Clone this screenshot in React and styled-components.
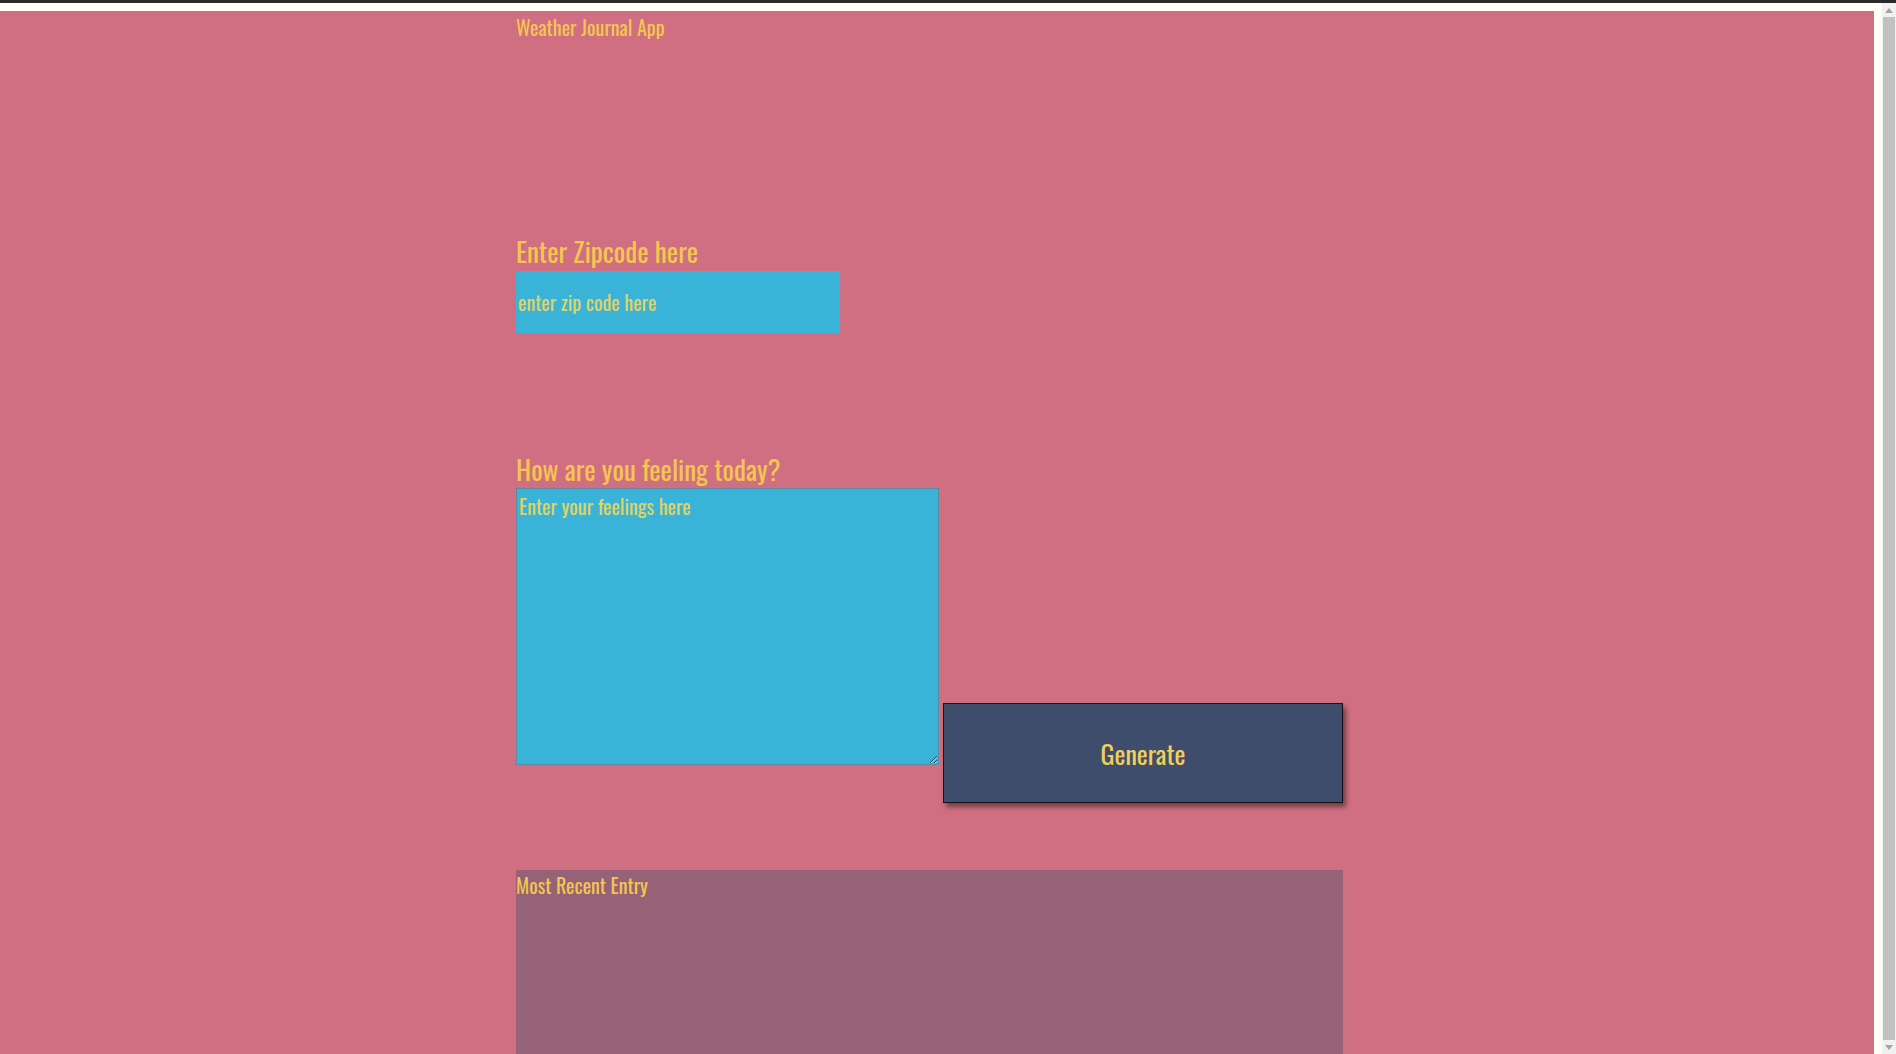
import React from "react";
import styled, { createGlobalStyle } from "styled-components";

const GlobalStyle = createGlobalStyle`
  html {
    border-top: 3px solid #2a2a2a;
    background: #fffff8;
  }
  body {
    margin: 8px 22px 0 0;
    background: #fffff8;
  }
`;

const font = `"Oswald", "Liberation Sans Narrow", "DejaVu Sans Condensed", "Liberation Sans", sans-serif`;

const Page = styled.div`
  background: #d06f82;
  display: grid;
  grid-template-columns: 516px 827px 1fr;
  font-family: ${font};
  color: #f4c64f;
  min-height: 1200px;
`;

const Column = styled.main`
  grid-column: 2;
  display: flex;
  flex-direction: column;
`;

const AppTitle = styled.div`
  font-size: 20px;
  line-height: 24px;
  padding-top: 4px;
`;

const Section = styled.section`
  display: flex;
  flex-direction: column;
  margin-top: ${({ $top }) => $top}px;
`;

const Label = styled.label`
  font-size: 27px;
  line-height: 32px;
  margin-bottom: ${({ $gap }) => $gap}px;
`;

const ZipInput = styled.input`
  width: 324px;
  height: 62px;
  box-sizing: border-box;
  border: none;
  outline: none;
  background: #3ab3d9;
  padding: 0 2px;
  font-family: ${font};
  font-size: 20px;
  color: #dfd366;
  &::placeholder {
    color: #dfd366;
  }
`;

const FeelingRow = styled.div`
  display: flex;
  align-items: flex-start;
  gap: 4px;
`;

const Feelings = styled.textarea`
  width: 423px;
  height: 277px;
  box-sizing: border-box;
  border: 1px solid #5d8aa0;
  outline: none;
  background: #3ab3d9;
  padding: 2px 2px;
  font-family: ${font};
  font-size: 20px;
  color: #dfd366;
  &::placeholder {
    color: #dfd366;
  }
`;

const GenerateButton = styled.button`
  margin-top: 215px;
  width: 400px;
  height: 100px;
  box-sizing: border-box;
  background: #3d4d6b;
  border: 1px solid #111;
  box-shadow: 3px 4px 5px rgba(0, 0, 0, 0.45);
  font-family: ${font};
  font-size: 26px;
  color: #f0cf5a;
  cursor: pointer;
`;

const EntryHolder = styled.section`
  margin-top: 67px;
  background: #956277;
  height: 320px;
`;

const EntryTitle = styled.div`
  font-size: 20px;
  line-height: 26px;
  padding-top: 2px;
`;

/* the browser's classic scrollbar, which the reference shows on the right */
const ScrollTrack = styled.div`
  position: fixed;
  top: 3px;
  right: 0;
  bottom: 0;
  width: 14px;
  background: #f1f1f1;
  display: flex;
  flex-direction: column;
  align-items: center;
`;

const ScrollArrow = styled.div`
  height: 14px;
  display: flex;
  align-items: center;
  justify-content: center;
  flex-shrink: 0;
`;

const ScrollThumb = styled.div`
  flex: 1;
  width: 12px;
  background: #c1c1c1;
`;

const Arrow = ({ down }) => (
  <svg width="8" height="5" viewBox="0 0 8 5">
    <path d={down ? "M0 0 H8 L4 5 Z" : "M0 5 H8 L4 0 Z"} fill="#a3a3a3" />
  </svg>
);

export default function App() {
  return (
    <>
      <GlobalStyle />
      <Page>
        <Column>
          <AppTitle>Weather Journal App</AppTitle>
          <Section $top={196}>
            <Label htmlFor="zip" $gap={4}>Enter Zipcode here</Label>
            <ZipInput id="zip" type="text" placeholder="enter zip code here" />
          </Section>
          <Section $top={120}>
            <Label htmlFor="feelings" $gap={3}>How are you feeling today?</Label>
            <FeelingRow>
              <Feelings id="feelings" placeholder="Enter your feelings here" />
              <GenerateButton>Generate</GenerateButton>
            </FeelingRow>
          </Section>
          <EntryHolder>
            <EntryTitle>Most Recent Entry</EntryTitle>
          </EntryHolder>
        </Column>
      </Page>
      <ScrollTrack aria-hidden="true">
        <ScrollArrow><Arrow /></ScrollArrow>
        <ScrollThumb />
        <ScrollArrow><Arrow down /></ScrollArrow>
      </ScrollTrack>
    </>
  );
}
